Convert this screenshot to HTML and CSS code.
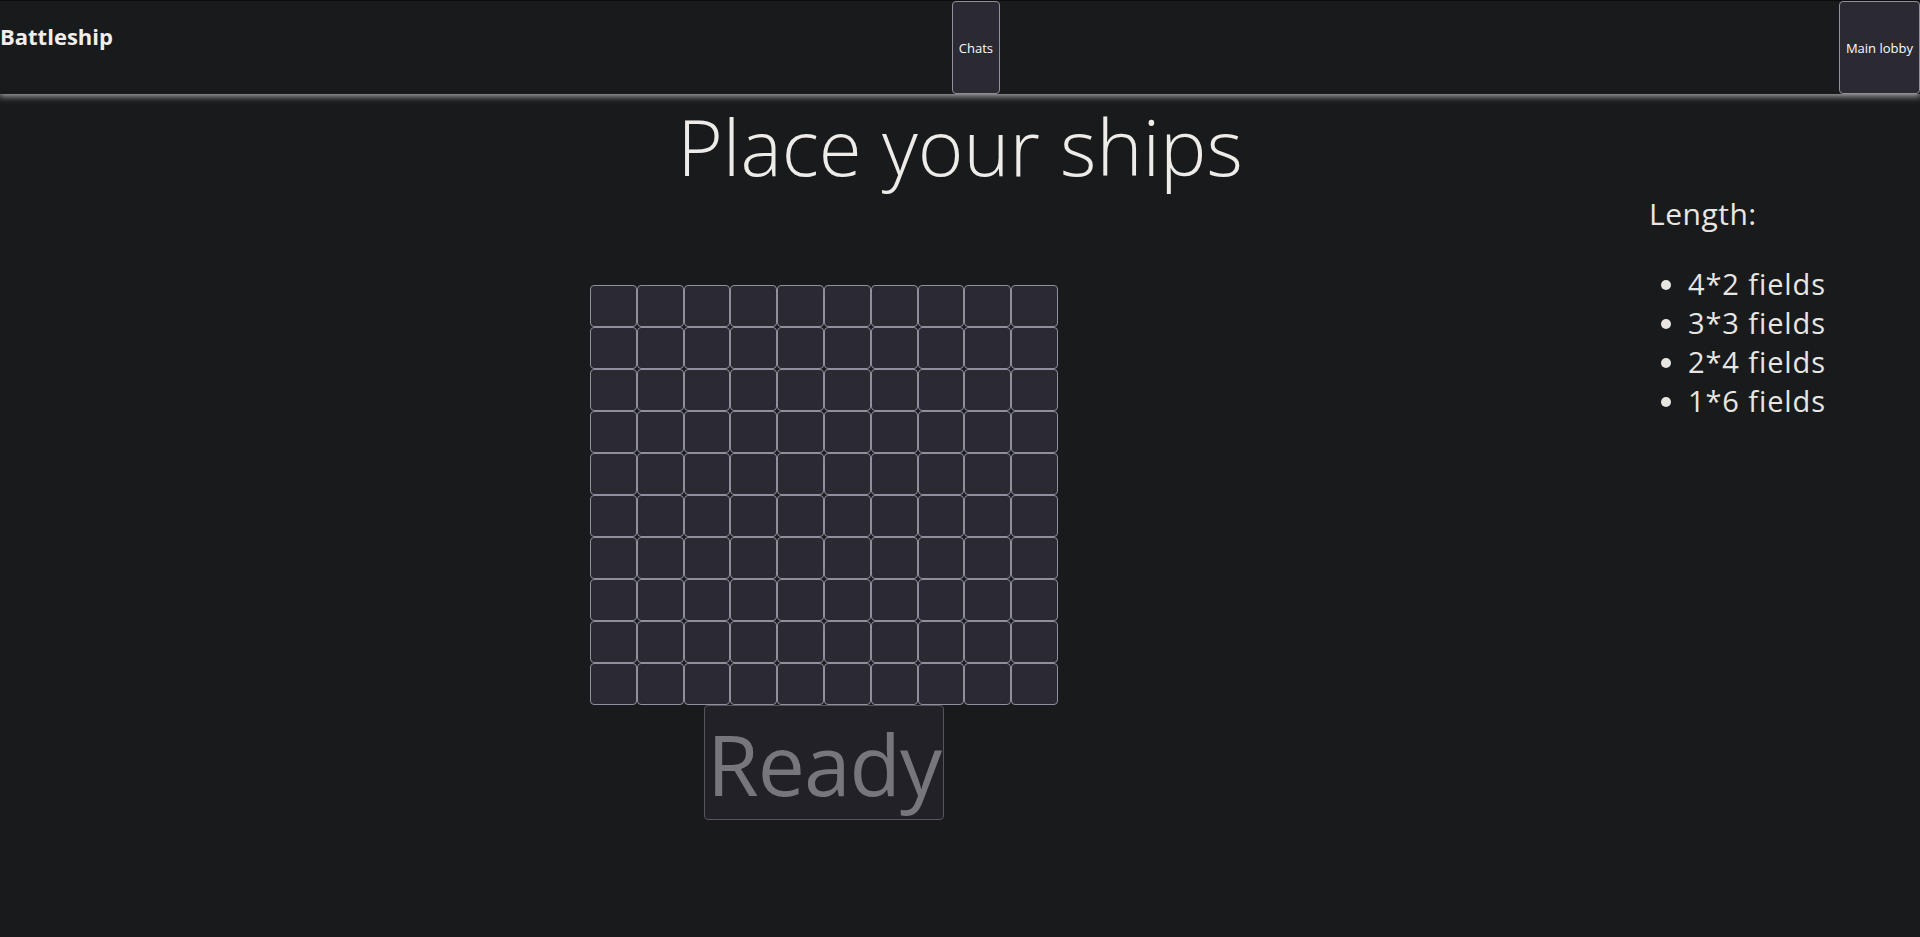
FILE: index.html
```html
<!DOCTYPE html>
<html>
<head>
<meta charset="utf-8">
<title>Battleship</title>
<link rel="stylesheet" href="styles.css">
</head>
<body>
<header class="topbar">
  <div class="brand">Battleship</div>
  <button class="nav-btn">Chats</button>
  <button class="nav-btn">Main lobby</button>
</header>
<main class="page">
  <h1 class="title">Place your ships</h1>
  <div class="content">
    <div class="board-col">
      <div class="board" id="board"></div>
      <button class="ready" disabled>Ready</button>
    </div>
    <aside class="info">
      <p class="info-label">Length:</p>
      <ul class="info-list">
        <li>4*2 fields</li>
        <li>3*3 fields</li>
        <li>2*4 fields</li>
        <li>1*6 fields</li>
      </ul>
    </aside>
  </div>
</main>
<script src="script.js"></script>
</body>
</html>
```

FILE: script.js
```js
var board = document.getElementById('board');
for (var i = 0; i < 100; i++) {
  var b = document.createElement('button');
  b.className = 'cell';
  board.appendChild(b);
}
```

FILE: styles.css
```css
html, body {
  margin: 0;
  padding: 0;
}
body {
  background: #181a1b;
  color: #e8e6e3;
  font-family: "Open Sans", "Noto Sans", sans-serif;
  height: 937px;
  overflow: hidden;
}
.topbar {
  display: flex;
  justify-content: space-between;
  align-items: stretch;
  height: 93px;
  border-top: 1px solid #0c0c0d;
  background: #181a1b;
  box-shadow: 0 1px 7px 1px #b4b4b4;
  position: relative;
  z-index: 1;
}
.brand {
  font-size: 22px;
  font-weight: 700;
  letter-spacing: 0;
  padding-top: 20px;
  line-height: 30px;
  color: #f0eeeb;
}
.nav-btn {
  font-family: "Open Sans", sans-serif;
  font-size: 13px;
  color: #fbfbfe;
  background: #2b2a33;
  border: 1px solid #8f8f9d;
  border-radius: 4px;
  padding: 0 6px;
  margin: 0;
}
.page {
  display: flex;
  flex-direction: column;
}
.title {
  margin: 4px 0 0;
  text-align: center;
  font-size: 78px;
  font-weight: 300;
  line-height: 96px;
  letter-spacing: 0;
  color: #eeece9;
}
.content {
  display: flex;
  align-items: flex-start;
  padding-left: 590px;
}
.board-col {
  display: flex;
  flex-direction: column;
  align-items: center;
  margin-top: 91px;
}
.board {
  display: grid;
  grid-template-columns: repeat(10, 46.8px);
  grid-template-rows: repeat(10, 42px);
}
.cell {
  margin: 0;
  padding: 0;
  background: #2b2a33;
  border: 1px solid #8f8f9d;
  border-radius: 4px;
}
.ready {
  width: 240px;
  height: 115px;
  margin: 0;
  padding: 0;
  font-family: "Open Sans", sans-serif;
  font-size: 84px;
  letter-spacing: -1px;
  color: #77767c;
  background: #222127;
  border: 1px solid #55545a;
  border-radius: 4px;
}
.info {
  margin-left: auto;
  width: 271px;
}
.info-label {
  margin: 0;
  line-height: 39px;
  font-size: 30px;
  letter-spacing: 0.5px;
}
.info-list {
  margin: 31px 0 0;
  padding-left: 39px;
  line-height: 39px;
  font-size: 29px;
  letter-spacing: 0.9px;
}
```
